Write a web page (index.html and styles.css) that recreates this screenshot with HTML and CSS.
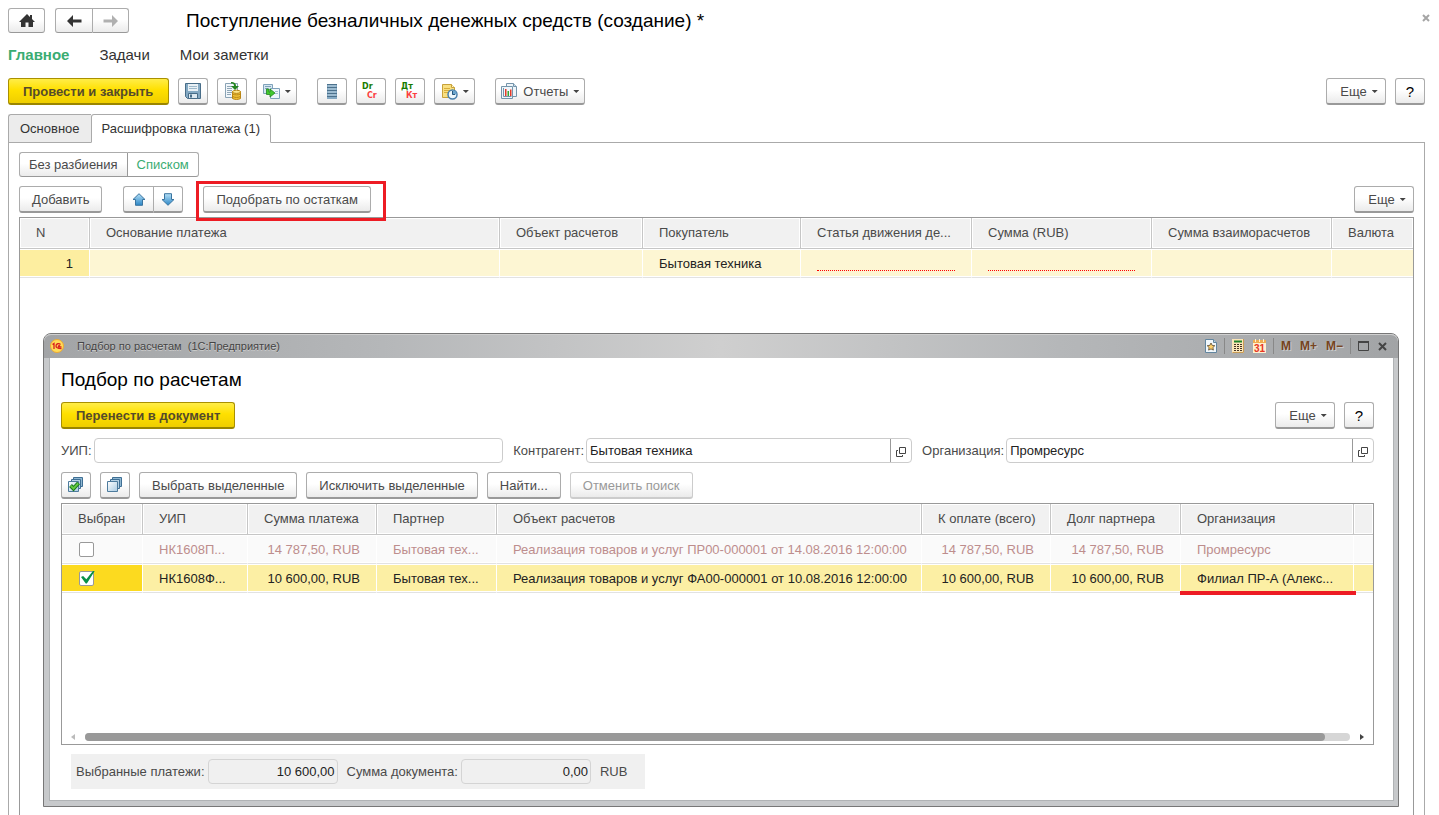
FILE: index.html
```html
<!DOCTYPE html>
<html lang="ru">
<head>
<meta charset="utf-8">
<title>Поступление безналичных денежных средств (создание) *</title>
<link rel="stylesheet" href="styles.css">
</head>
<body>
<svg class="defs" width="0" height="0" aria-hidden="true">
  <defs>
    <linearGradient id="blue" x1="0" y1="0" x2="0" y2="1"><stop offset="0" stop-color="#b5e0f7"/><stop offset="1" stop-color="#2b86c6"/></linearGradient>
    <linearGradient id="steel" x1="0" y1="0" x2="1" y2="1"><stop offset="0" stop-color="#fff"/><stop offset="1" stop-color="#a9cbe2"/></linearGradient>
    <symbol id="open" viewBox="0 0 10 10"><path d="M3.500.5h6v6h-6zM2 3.500H.5v6h6V8" fill="none" stroke="#444"/></symbol>
    <symbol id="stack" viewBox="0 0 16 16"><path d="M5.500.5h9v9h-9z" fill="#8fb8d3" stroke="#3f6f94"/><path d="M3.500 2.500h9v9h-9z" fill="#b5d1e3" stroke="#3f6f94"/><path d="M.5 4.500h10v10H.5z" fill="url(#steel)" stroke="#4d7b9d"/></symbol>
  </defs>
</svg>

<header class="top">
  <button class="btn flat home" aria-label="Домой"><svg width="16" height="14" viewBox="0 0 16 14"><path d="M8 0l3 3V1h2v4l3 3h-2v5H9.500V8.500h-3V13H2V8H0z" fill="#333"/></svg></button>
  <div class="group">
    <button class="btn flat arrow" aria-label="Назад"><svg width="15" height="12" viewBox="0 0 15 12"><path d="M6 0v4.500h8.500v3H6V12L0 6z" fill="#333"/></svg></button>
    <button class="btn flat arrow" aria-label="Вперед"><svg width="15" height="12" viewBox="0 0 15 12"><path d="M9 0v4.500H.5v3H9V12l6-6z" fill="#b0b0b0"/></svg></button>
  </div>
  <h1>Поступление безналичных денежных средств (создание) *</h1>
  <button class="close" aria-label="Закрыть"><svg width="8" height="8" viewBox="0 0 8 8"><path d="M1 1l6 6M7 1L1 7" stroke="#a5a5a5" stroke-width="2"/></svg></button>
</header>

<nav class="nav">
  <a class="current" href="#">Главное</a><a href="#">Задачи</a><a href="#">Мои заметки</a>
</nav>

<div class="bar main-bar">
  <button class="btn primary">Провести и закрыть</button>
  <button class="btn icon" aria-label="Записать"><svg width="16" height="16" viewBox="0 0 16 16"><path d="M.5.5h15v15H2.500l-2-2z" fill="#84a9c3" stroke="#486d88"/><path d="M3 1h10v7H3z" fill="#e9f1f6"/><path d="M4 3.500h8M4 5.500h8" stroke="#9db9cb"/><path d="M3.500 10.500h9v5h-9z" fill="#dde9f1" stroke="#486d88"/><path d="M5 11.500h2v3H5z" fill="#486d88"/></svg></button>
  <button class="btn icon" aria-label="Провести"><svg width="17" height="18" viewBox="0 0 17 18"><path d="M1.500 1.500h12v14h-12z" fill="#f1f6fa" stroke="#8aa3b5"/><path d="M3 4.500h5M3 6.500h5M3 8.500h5M3 10.500h5M3 12.500h4" stroke="#8fa6b6"/><path d="M7 0c3 0 5 1 5 4h3l-4 4-4-4h3C10 2 9 1.500 7 1.500z" fill="#23841f"/><path d="M8.500 9.500h8v7c-2 1.300-6 1.300-8 0z" fill="#f1c338" stroke="#b98514"/><ellipse cx="12.500" cy="9.800" rx="4" ry="1.600" fill="#ffe88b" stroke="#b98514"/><path d="M8.500 12c2 1.200 6 1.200 8 0M8.500 14.500c2 1.200 6 1.200 8 0" fill="none" stroke="#b98514"/></svg></button>
  <button class="btn icon drop" aria-label="Создать на основании"><svg width="17" height="15" viewBox="0 0 17 15"><path d="M.5.5h9v9h-9z" fill="#d5e6f2" stroke="#7fa2ba"/><path d="M2 2.500h6M2 4.500h3" stroke="#7fa2ba"/><path d="M7.500 4.500h9v10h-9z" fill="#eff6fb" stroke="#7fa2ba"/><path d="M12 7.500h3M12 9.500h3" stroke="#a4bfd0"/><path d="M3.500 5v5.500H7V13l5-4-5-4v3H6V5z" fill="#42c82e" stroke="#23841f" stroke-width=".8"/></svg><i class="caret"></i></button>
  <span class="gap"></span>
  <button class="btn icon" aria-label="Регистр"><svg width="10" height="15" viewBox="0 0 10 15"><path d="M0 0h10v15H0z" fill="#85a9c3"/><path d="M0 .5h10M0 3.500h10M0 6.500h10M0 9.500h10M0 12.500h10" stroke="#4c718c"/><path d="M1 2h8M1 5h8M1 8h8M1 11h8" stroke="#b5cede"/></svg></button>
  <button class="btn icon" aria-label="Dr/Cr"><svg class="ledger" width="18" height="18"><text x="0" y="7" fill="#187c00">Dr</text><text x="5" y="16" fill="#fb3e3e">Cr</text></svg></button>
  <button class="btn icon" aria-label="Дт/Кт"><svg class="ledger" width="18" height="18"><text x="0" y="7" fill="#187c00">Дт</text><text x="5" y="16" fill="#fb3e3e">Кт</text></svg></button>
  <button class="btn icon drop" aria-label="Задача"><svg width="17" height="17" viewBox="0 0 17 17"><path d="M1.500 1.500h9l3 3v10h-12z" fill="#f8df81" stroke="#c7a13a"/><path d="M10.500 1.500v3h3" fill="#fff5c8" stroke="#c7a13a"/><path d="M3 5.500h6M3 7.500h6M3 9.500h4" stroke="#d9ae39"/><circle cx="11.500" cy="11.500" r="4.500" fill="#edf7fc" stroke="#477fac" stroke-width="1.500"/><path d="M11.500 11.500V7.500a4 4 0 0 1 4 4z" fill="#6aa5cd"/><path d="M11.500 8v3.500H14" fill="none" stroke="#24557d"/></svg><i class="caret"></i></button>
  <span class="gap"></span>
  <button class="btn reports"><svg width="17" height="17" viewBox="0 0 17 17"><path d="M5.500.5h7l3 3v10h-10z" fill="#eef5fa" stroke="#7594aa"/><path d="M12.500.5v3h3" fill="#c6dbea" stroke="#7594aa"/><path d="M.5 3.500h11v12H.5z" fill="#eef5fa" stroke="#7594aa"/><path d="M2.500 5v8.500h8" fill="none" stroke="#7594aa"/><path d="M4 6h1.500v7H4z" fill="#e53a28"/><path d="M6.500 8H8v5H6.500z" fill="#38a630"/><path d="M9 6.500h1.500V13H9z" fill="#e53a28"/></svg>Отчеты<i class="caret"></i></button>
  <span class="spring"></span>
  <button class="btn more">Еще<i class="caret"></i></button>
  <button class="btn icon help">?</button>
</div>

<div class="tabs" role="tablist">
  <button class="tab" role="tab">Основное</button><button class="tab active" role="tab" aria-selected="true">Расшифровка платежа (1)</button>
</div>

<main class="panel">
  <div class="group modes">
    <button class="btn flat">Без разбиения</button><button class="btn flat chosen">Списком</button>
  </div>
  <div class="bar row-bar">
    <button class="btn">Добавить</button>
    <div class="group moves">
      <button class="btn" aria-label="Вверх"><svg width="14" height="13" viewBox="0 0 14 13"><path d="M7 .7l6 5.800h-2.500v5.800h-7V6.500H1z" fill="url(#blue)" stroke="#3a749f"/></svg></button>
      <button class="btn" aria-label="Вниз"><svg width="14" height="13" viewBox="0 0 14 13"><path d="M7 12.300l6-5.800h-2.500V.7h-7v5.800H1z" fill="url(#blue)" stroke="#3a749f"/></svg></button>
    </div>
    <div class="marked"><button class="btn">Подобрать по остаткам</button></div>
    <span class="spring"></span>
    <button class="btn more">Еще<i class="caret"></i></button>
  </div>
  <div class="grid-box">
    <table class="grid payments">
      <colgroup><col class="w70"><col><col class="w143"><col class="w158"><col class="w171"><col class="w180"><col class="w180"><col class="w81"></colgroup>
      <thead><tr><th>N</th><th>Основание платежа</th><th>Объект расчетов</th><th>Покупатель</th><th>Статья движения де...</th><th>Сумма (RUB)</th><th>Сумма взаиморасчетов</th><th>Валюта</th></tr></thead>
      <tbody><tr class="pale"><td class="num focus">1</td><td></td><td></td><td>Бытовая техника</td><td><span class="dots"></span></td><td><span class="dots"></span></td><td></td><td></td></tr></tbody>
    </table>
  </div>
</main>

<section class="window" aria-label="Подбор по расчетам">
  <div class="titlebar">
    <svg width="14" height="14" viewBox="0 0 14 14"><circle cx="7" cy="7" r="6.500" fill="#ffdc58" stroke="#eda931"/><path d="M2.500 5.500L4 4.500V10M10.500 5.500C9 4 6 4.500 6 7c0 2 1.500 2.500 5.500 2.500M10 7c-1-.8-2 0-1.500.8h3" fill="none" stroke="#d91e1e" stroke-width="1.300"/></svg>
    <span class="caption">Подбор по расчетам&nbsp; (1С:Предприятие)</span>
    <span class="spring"></span>
    <button class="sys" aria-label="Избранное"><svg width="12" height="14" viewBox="0 0 12 14"><path d="M.5.500h8l3 3v10H.5z" fill="#f1f7fb" stroke="#62859f"/><path d="M8.500.5v3h3" fill="#b7d1e3" stroke="#62859f"/><path d="M6 4l1.200 2.400 2.600.3-1.900 1.800.5 2.600L6 9.900l-2.400 1.200.5-2.600-1.900-1.800 2.600-.3z" fill="#ffd16b" stroke="#59462b" stroke-width=".8"/></svg></button>
    <i class="rule"></i>
    <button class="sys" aria-label="Калькулятор"><svg width="12" height="14" viewBox="0 0 12 14"><path d="M0 0h12v14H0z" fill="#fbe6b8"/><path d="M.5 13.500h11V0" fill="none" stroke="#c99b55"/><path d="M2 1.500h8v2H2z" fill="#22852a"/><path d="M2 5.500h8M2 7.500h8M2 9.500h8M2 11.500h8" stroke="#463426" stroke-dasharray="2 1"/></svg></button>
    <button class="sys" aria-label="Календарь"><svg width="13" height="14" viewBox="0 0 13 14"><path d="M0 1h13v13H0z" fill="#fff0cf"/><path d="M0 1h13v3H0z" fill="#efad52"/><path d="M2.500 0v3M6.500 0v3M10.500 0v3" stroke="#fff1cc"/><text x="6.500" y="13" text-anchor="middle" class="day">31</text></svg></button>
    <i class="rule"></i>
    <button class="sys mem">M</button><button class="sys mem">M+</button><button class="sys mem">M−</button>
    <i class="rule"></i>
    <button class="sys max" aria-label="Развернуть"><svg width="11" height="10" viewBox="0 0 11 10"><path d="M.5 1v8.500h10V1" fill="none" stroke="#444"/><path d="M0 1h11" stroke="#444" stroke-width="2"/></svg></button>
    <button class="sys" aria-label="Закрыть окно"><svg width="9" height="9" viewBox="0 0 9 9"><path d="M1 1l7 7M8 1L1 8" stroke="#444" stroke-width="2"/></svg></button>
  </div>
  <div class="body">
    <h2>Подбор по расчетам</h2>
    <div class="bar">
      <button class="btn primary">Перенести в документ</button>
      <span class="spring"></span>
      <button class="btn more">Еще<i class="caret"></i></button>
      <button class="btn icon help">?</button>
    </div>
    <div class="fields">
      <label for="uip">УИП:</label>
      <div class="field f-uip"><input id="uip" type="text"></div>
      <label for="partner">Контрагент:</label>
      <div class="field f-partner"><input id="partner" type="text" value="Бытовая техника"><button aria-label="Открыть"><svg width="10" height="10"><use href="#open"/></svg></button></div>
      <label for="org">Организация:</label>
      <div class="field f-org"><input id="org" type="text" value="Промресурс"><button aria-label="Открыть"><svg width="10" height="10"><use href="#open"/></svg></button></div>
    </div>
    <div class="bar">
      <button class="btn icon" aria-label="Выбрать все"><svg width="16" height="16" viewBox="0 0 16 16"><use href="#stack" width="16" height="16"/><path d="M2.500 8.500l3 3 5-5.500" fill="none" stroke="#17781a" stroke-width="4"/><path d="M2.800 8.800l2.700 2.700 4.700-5.200" fill="none" stroke="#63c83f" stroke-width="2"/></svg></button>
      <button class="btn icon" aria-label="Снять все"><svg width="16" height="16"><use href="#stack"/></svg></button>
      <button class="btn">Выбрать выделенные</button>
      <button class="btn">Исключить выделенные</button>
      <button class="btn">Найти...</button>
      <button class="btn" disabled>Отменить поиск</button>
    </div>
    <div class="grid-box picks-box">
      <table class="grid picks">
        <colgroup><col class="w81"><col class="w105"><col class="w129"><col class="w120"><col><col class="w129"><col class="w130"><col class="w173"><col class="w19"></colgroup>
        <thead><tr><th>Выбран</th><th>УИП</th><th>Сумма платежа</th><th>Партнер</th><th>Объект расчетов</th><th>К оплате (всего)</th><th>Долг партнера</th><th>Организация</th><th></th></tr></thead>
        <tbody>
          <tr class="muted"><td><input type="checkbox" aria-label="Выбрать НК1608П"></td><td>НК1608П...</td><td class="num">14 787,50, RUB</td><td>Бытовая тех...</td><td>Реализация товаров и услуг ПР00-000001 от 14.08.2016 12:00:00</td><td class="num">14 787,50, RUB</td><td class="num">14 787,50, RUB</td><td>Промресурс</td><td></td></tr>
          <tr class="selected"><td class="focus"><input type="checkbox" aria-label="Выбрать НК1608Ф" checked></td><td>НК1608Ф...</td><td class="num">10 600,00, RUB</td><td>Бытовая тех...</td><td>Реализация товаров и услуг ФА00-000001 от 10.08.2016 12:00:00</td><td class="num">10 600,00, RUB</td><td class="num">10 600,00, RUB</td><td class="underlined">Филиал ПР-А (Алекс...</td><td></td></tr>
        </tbody>
      </table>
      <div class="scroll"><i class="left"></i><div class="track"><div class="thumb"></div></div><i class="right"></i></div>
    </div>
    <div class="totals">
      <label for="sel">Выбранные платежи:</label><input id="sel" type="text" value="10 600,00" readonly>
      <label for="sum">Сумма документа:</label><input id="sum" type="text" value="0,00" readonly>
      <span>RUB</span>
    </div>
  </div>
</section>
</body>
</html>
```

FILE: styles.css
```css
* { box-sizing: border-box; }
body, button, input { font-family: "Liberation Sans", Arial, sans-serif; font-size: 13px; color: #4a4a4a; }
body { margin: 0; padding: 8px 14px 0 8px; height: 100vh; overflow: hidden; position: relative; display: flex; flex-direction: column; background: #fff; }
.defs { position: absolute; }
svg { display: block; flex: none; }
h1, h2 { margin: 0; font-weight: 400; font-size: 19px; line-height: 25px; color: #000; white-space: nowrap; }
.spring { flex: 1; }
.gap { width: 2px; }

/* Buttons */
.btn { display: flex; align-items: center; justify-content: center; height: 27px; padding: 0 12px; border: 1px solid #acacac; border-bottom: 2px solid #999; border-radius: 3px; background: linear-gradient(#fff 45%, #ebebeb); white-space: nowrap; }
.btn.flat { height: 25px; border-bottom: 1px solid #999; }
.btn.primary { padding: 0 14px; font-weight: 700; color: #554b2b; border: 1px solid #a99000; border-bottom: 2px solid #9a8500; background: linear-gradient(#ffed48, #ffe000 45%, #efce00); }
.btn.icon { width: 30px; padding: 0; }
.btn.icon.drop { width: 41px; gap: 5px; }
.btn.reports { padding: 0 5px; gap: 5px; }
.btn.more { width: 60px; padding: 0 0 0 6px; gap: 5px; }
.btn.help { font-size: 15px; color: #000; }
.btn:disabled { color: #999; border-color: #ccc; }
.caret { width: 6px; height: 3px; margin-top: 1px; background: #444; clip-path: polygon(0 0, 100% 0, 50% 100%); }
.ledger { font: bold 8px "DejaVu Sans", sans-serif; }
.group { display: flex; }
.group .btn:not(:last-child) { border-right: 0; border-radius: 3px 0 0 3px; }
.group .btn:not(:first-child) { border-radius: 0 3px 3px 0; }
.bar { display: flex; gap: 9px; }
.main-bar .primary { padding: 0 15px 0 14px; }

/* Page head */
.top { display: flex; gap: 10px; }
.home { width: 37px; padding: 0; }
.arrow { width: 37px; padding: 0; }
.top h1 { flex: 1; margin-left: 47px; }
.close { align-self: start; padding: 0; margin: 6px -5px 0 0; border: 0; background: none; }
.nav { display: flex; gap: 30px; margin: 13px 0 14px; font-size: 15px; line-height: 18px; }
.nav a { color: #333; text-decoration: none; }
.nav .current { color: #3aac72; font-weight: 700; }

/* Tabs and panel */
.tabs { display: flex; margin: 9px 0 -1px; }
.tab { height: 29px; padding: 0 11px; border: 1px solid #aaa; border-radius: 3px 0 0 0; border-right: 0; background: #ececec; color: #333; }
.tab.active { padding: 0 10px; border-right: 1px solid #aaa; border-bottom-color: #fff; border-radius: 3px 3px 0 0; background: #fff; position: relative; }
.panel { flex: 1; min-height: 0; display: flex; flex-direction: column; padding: 9px 10px 0; border: 1px solid #aaa; border-bottom: 0; }
.modes .btn { padding: 0 9px; }
.modes .btn.chosen { background: #fff; color: #3aac72; border-left: 1px solid #999; }
.row-bar { margin: 9px 0 4px; }
.moves { margin-left: 12px; }
.moves .btn { width: 30px; padding: 0; }
.moves .btn:last-child { border-left: 1px solid #acacac; }
.marked { margin: -5px -9px -8px 4px; padding: 2px 12px 5px 4px; border: 3px solid #ed1c24; position: relative; }

/* Grids */
.grid-box { flex: 1; min-height: 0; display: flex; flex-direction: column; border: 1px solid #999; border-bottom: 0; background: #fff; }
.grid { width: 100%; table-layout: fixed; border-collapse: separate; border-spacing: 0; }
.grid th, .grid td { padding: 0 0 0 16px; text-align: left; font-weight: 400; white-space: nowrap; overflow: hidden; }
.grid th { height: 31px; padding-bottom: 2px; background: #f1f1f1; border-right: 1px solid #c6c6c6; border-bottom: 1px solid #c6c6c6; box-shadow: inset 0 0 0 1px #fff; }
.grid td { height: 29px; color: #222; border-bottom: 1px solid #e2e2e2; border-right: 1px solid #fff; box-shadow: inset 0 -1px #fff, inset 0 1px #fff; }
.grid th:last-child, .grid td:last-child { border-right: 0; }
.grid td.num { text-align: right; padding: 0 16px 0 0; }
.grid .pale td { background: #fdf6d3; }
.grid .pale td.focus { background: #fdeea0; }
.grid .muted td { background: #fafafa; color: #bd8d8d; }
.grid .selected td { background: #fcefa4; }
.grid .selected td.focus { background: #fcda1f; }
.grid td.underlined { position: relative; overflow: visible; }
.underlined::after { content: ""; position: absolute; left: -1px; right: -3px; bottom: -3px; height: 4px; background: #ed1c24; }
.dots { display: block; height: 15px; margin-right: 16px; border-bottom: 1px dotted #f00; }
.w19 { width: 19px; } .w70 { width: 70px; } .w81 { width: 81px; }
.w105 { width: 105px; } .w120 { width: 120px; } .w129 { width: 129px; } .w130 { width: 130px; }
.w143 { width: 143px; } .w158 { width: 158px; } .w171 { width: 171px; } .w173 { width: 173px; } .w180 { width: 180px; }
.grid input { appearance: none; display: block; width: 15px; height: 15px; margin: 0 0 0 1px; border: 1px solid #999; border-radius: 2px; background: #fff; position: relative; }
.grid input:checked::after { content: ""; position: absolute; left: 1px; top: -1px; width: 14px; height: 13px; background: #089047; clip-path: polygon(0 50%, 15% 42%, 38% 68%, 88% 0, 100% 0, 42% 100%, 34% 100%); }

/* Pick window */
.window { position: absolute; left: 43px; right: 40px; top: 333px; bottom: 8px; display: flex; flex-direction: column; padding: 0 5px 5px; border: 1px solid #777; border-radius: 8px 8px 0 0; background: #c7c9cb; }
.titlebar { display: flex; align-items: center; gap: 9px; height: 24px; margin: 0 -5px; padding: 0 11px 0 6px; border-radius: 7px 7px 0 0; background: linear-gradient(90deg, #a2a4a6, #b5b7b9 25%, #cfcfcf 50%, #b5b7b9 75%, #a2a4a6); box-shadow: inset 0 1px #d0d0d0; }
.caption { font-size: 11px; color: #444; margin-left: 4px; text-shadow: 0 1px #ccc; }
.sys { padding: 0; border: 0; background: none; }
.sys.mem { font-size: 12px; font-weight: 700; color: #764321; text-shadow: 1px 1px #ccc; }
.day { font: bold 10px "Liberation Sans", sans-serif; fill: #e73622; }
.rule { width: 1px; height: 16px; background: #888; margin: 0 -2px; }
.body { flex: 1; min-height: 0; display: flex; flex-direction: column; padding: 9px 19px 11px 11px; border: 1px solid #b0b3b5; border-top: 0; background: #fff; margin: 0 -1px 0 0; }
.body h2 { margin-bottom: 10px; }
.fields { display: flex; align-items: center; margin: 9px 0; }
.fields label { white-space: nowrap; margin-right: 2px; }
.field { display: flex; height: 25px; margin-right: 10px; min-width: 0; border: 1px solid #ccc; border-radius: 4px; background: #fff; }
.field:last-child { margin-right: 0; }
.f-uip { flex: 410 1 0; } .f-partner { flex: 326 1 0; } .f-org { flex: 368 1 0; }
.field input { flex: 1; min-width: 0; padding: 0 3px; border: 0; background: none; color: #222; }
.field button { width: 21px; padding: 2px 0 0 5px; border: 0; border-left: 1px solid #999; background: none; }
.picks-box { margin-top: 4px; border-bottom: 1px solid #999; }
.scroll { display: flex; align-items: center; gap: 10px; margin-top: auto; padding: 3px 9px; }
.scroll i { width: 4px; height: 6px; background: #444; clip-path: polygon(0 0, 100% 50%, 0 100%); }
.scroll .left { background: #bbb; clip-path: polygon(100% 0, 0 50%, 100% 100%); }
.track { flex: 1; height: 8px; border-radius: 4px; background: #d6d6d6; }
.thumb { width: 98%; height: 8px; border-radius: 4px; background: #999; }
.totals { align-self: flex-start; display: flex; align-items: center; gap: 3px; margin: 9px 0 0 10px; padding: 5px 18px 5px 5px; background: #f0f0f0; }
.totals input { width: 130px; height: 25px; padding: 0 2px; margin-right: 6px; text-align: right; border: 1px solid #d4d4d4; border-radius: 4px; background: #f0f0f0; color: #222; }
```
